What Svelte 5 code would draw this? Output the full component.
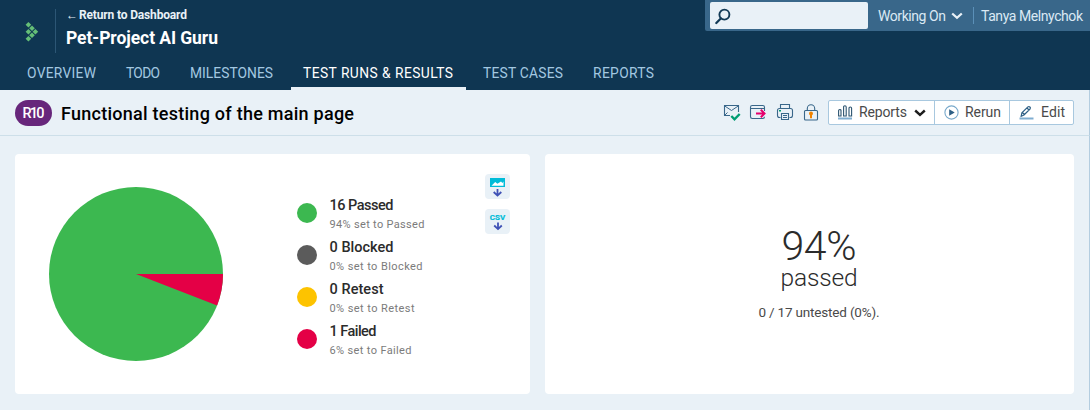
<script>
  const tabs = [
    { label: 'OVERVIEW', w: 69 },
    { label: 'TODO', w: 34 },
    { label: 'MILESTONES', w: 83 },
    { label: 'TEST RUNS & RESULTS', w: 150, active: true },
    { label: 'TEST CASES', w: 80 },
    { label: 'REPORTS', w: 61 }
  ];

  const statuses = [
    { count: 16, name: 'Passed', percent: 94, color: '#3cb850', w: 64, sw: 95 },
    { count: 0, name: 'Blocked', percent: 0, color: '#5b5b5b', w: 64, sw: 93 },
    { count: 0, name: 'Retest', percent: 0, color: '#fdc300', w: 54, sw: 85 },
    { count: 1, name: 'Failed', percent: 6, color: '#e40046', w: 47, sw: 82 }
  ];

  const radius = 87;
  const angle = (1 / 17) * Math.PI * 2;
  const endX = radius + radius * Math.cos(angle);
  const endY = radius + radius * Math.sin(angle);

  const logoDots = [[3.4, 3.7], [7, 7.2], [3.4, 10.7], [10.4, 10.7], [7, 14.2], [3.4, 17.7]];

  // Tracks a label so that it fills the given width.
  function track(node, width) {
    const glyphs = node.textContent.length;
    const natural = node.getBoundingClientRect().width;
    const spacing = (width - natural) / (glyphs - 1);
    node.style.letterSpacing = `${spacing}px`;
    node.style.marginRight = `${-spacing}px`;
  }
</script>

<div class="page">
  <header>
    <div class="top">
      <div class="logo">
        <svg width="14" height="22" viewBox="0 0 14 22" fill="#65bf77">
          {#each logoDots as [x, y]}
            <path d="M{x} {y - 2.8}l2.8 2.8-2.8 2.8-2.8-2.8z" />
          {/each}
        </svg>
      </div>
      <div class="project">
        <a class="back" href="#dashboard"><b>←</b><span use:track={108}>Return to Dashboard</span></a>
        <div class="name"><span use:track={152}>Pet-Project AI Guru</span></div>
      </div>
      <div class="user">
        <div class="search">
          <svg width="16" height="17" viewBox="0 0 16 17" fill="none" stroke="#123a56">
            <circle cx="9.4" cy="6.6" r="5" stroke-width="1.9" />
            <path d="M5.8 10.4L1.3 15" stroke-width="2.2" stroke-linecap="round" />
          </svg>
        </div>
        <div class="working"><span use:track={68}>Working On</span></div>
        <svg class="chev" width="12" height="8" viewBox="0 0 12 8" fill="none" stroke="#e9f1f7" stroke-width="2.3"><path d="M1.2 1.5L6 5.8l4.8-4.3" /></svg>
        <div class="me"><span use:track={102}>Tanya Melnychok</span></div>
      </div>
    </div>
    <nav>
      {#each tabs as t}
        <a href="#tab" class:active={t.active}><span use:track={t.w}>{t.label}</span></a>
      {/each}
    </nav>
  </header>

  <section class="titlebar">
    <div class="badge"><span use:track={22}>R10</span></div>
    <h1><span use:track={293}>Functional testing of the main page</span></h1>
    <div class="icons">
      <svg width="18" height="18" viewBox="0 0 18 18" fill="none">
        <path d="M7 11.5H1.500v-10h14V8" stroke="#39678a" stroke-width="1.1" />
        <path d="M1.800 2L8.500 6.500 15.200 2M1.800 11.200l2.700-2.700" stroke="#39678a" />
        <path d="M8.300 12l3.200 3.300L16.700 10" stroke="#009d73" stroke-width="2.400" />
      </svg>
      <svg width="18" height="18" viewBox="0 0 18 18" fill="none">
        <path d="M15.500 7V3.200q0-1.700-1.700-1.700H3.200q-1.700 0-1.700 1.700v9.600q0 1.700 1.700 1.700h10.600q1.700 0 1.700-1.700M1.500 4.500h14" stroke="#39678a" stroke-width="1.1" />
        <path d="M7 9.500h8M11.800 5.800l3.700 3.700-3.700 3.700" stroke="#e5006d" stroke-width="2" />
      </svg>
      <svg width="18" height="18" viewBox="0 0 18 18" fill="none" stroke="#39678a" stroke-width="1.1">
        <path d="M4.500 4.500v-4h9v4M4.500 13.500h-1Q1.500 13.500 1.500 11.500V6.500q0-2 2-2h11q2 0 2 2v5q0 2-2 2h-1" />
        <path d="M5.500 9.500h7v6h-7zM7 11.500h4M7 13.500h4" />
        <path d="M3 6.700h2" stroke="#009d73" stroke-width="1.500" />
      </svg>
      <svg width="18" height="18" viewBox="0 0 18 18" fill="none">
        <rect x="2.500" y="6.500" width="13" height="9.500" rx="1" stroke="#39678a" stroke-width="1.1" />
        <path d="M5.300 6.500V4.500a3.700 3.700 0 0 1 7.400 0v2" stroke="#39678a" stroke-width="1.1" />
        <circle cx="9" cy="9.500" r="2" fill="#f08300" /><path d="M9 10v4.300" stroke="#f08300" stroke-width="2" />
      </svg>
    </div>
    <div class="buttons">
      <button class="reports">
        <svg width="15" height="16" viewBox="0 0 15 16" fill="none">
          <path d="M.6 5.500q0-1 1.200-1t1.200 1v5.500H.6zM5.600 2q0-1.200 1.300-1.200T8.200 2v9H5.600zM11 3.200Q11 2 12.300 2t1.300 1.200V11H11z" stroke="#2d5470" stroke-width="1.100" />
          <path d="M0 13.500h14" stroke="#7fadd0" stroke-width="2" />
        </svg>
        <span use:track={48}>Reports</span>
        <svg class="arrow" width="12" height="8" viewBox="0 0 12 8" fill="none" stroke="#1d1d1d" stroke-width="2.400"><path d="M1.200 1.500L6 5.800l4.800-4.300" /></svg>
      </button>
      <button class="rerun">
        <svg width="15" height="16" viewBox="0 0 15 16"><circle cx="7.500" cy="7.500" r="6.600" fill="none" stroke="#79a9cb" stroke-width="1.100" /><path d="M5.200 4.200l5.500 3.300-5.500 3.300z" fill="#2d5f85" /></svg>
        <span use:track={36}>Rerun</span>
      </button>
      <button class="edit">
        <svg width="15" height="16" viewBox="0 0 15 16" fill="none">
          <path d="M2.200 11.200l.7-3.300 6-6q1-.8 2 .1t.1 2l-6 6zM8 3l2 2M3.600 7.700l2.100 2" stroke="#2d5f85" stroke-width="1.200" />
          <path d="M.5 13.500h14" stroke="#7fadd0" stroke-width="2" />
        </svg>
        <span use:track={24}>Edit</span>
      </button>
    </div>
  </section>

  <main>
    <div class="card chart">
      <svg class="pie" width="174" height="174" viewBox="0 0 174 174">
        <circle cx="87" cy="87" r="87" fill="#3cb850" />
        <path d="M{radius} {radius}H{radius * 2}A{radius} {radius} 0 0 1 {endX} {endY}z" fill="#e40046" />
      </svg>
      <ul>
        {#each statuses as s}
          <li>
            <i style="background: {s.color}"></i>
            <div>
              <div class="count"><span use:track={s.w}>{s.count} {s.name}</span></div>
              <div class="sub"><span use:track={s.sw}>{s.percent}% set to {s.name}</span></div>
            </div>
          </li>
        {/each}
      </ul>
      <div class="exports">
        <a href="#image" aria-label="Save image">
          <svg width="25" height="25" viewBox="0 0 25 25" fill="none">
            <path d="M5 4h15v9H5z" fill="#00bcd8" />
            <path d="M6.500 11.700L10.200 8l2.200 1.800L16 7.500l1.400 1.500 1.100-1.500v4.200z" fill="#fff" />
            <path d="M12.500 15v6.500M8.700 18l3.800 3.600 3.800-3.600" stroke="#3f51b5" stroke-width="1.800" />
          </svg>
        </a>
        <a href="#csv" aria-label="Save data">
          <span class="csv">CSV</span>
          <svg width="10" height="9" viewBox="0 0 10 9" fill="none" stroke="#3f51b5" stroke-width="1.800"><path d="M5 .5V7M1.200 3.500L5 7.100l3.800-3.600" /></svg>
        </a>
      </div>
    </div>
    <div class="card summary">
      <div class="big"><span use:track={75}>94%</span></div>
      <div class="passed"><span use:track={77}>passed</span></div>
      <div class="untested"><span use:track={121}>0 / 17 untested (0%).</span></div>
    </div>
  </main>
</div>

<style>
  :global(body) { margin: 0; background: #e9f1f7; }
  .page {
    box-sizing: border-box; width: 1090px; height: 410px; overflow: hidden;
    font-family: Roboto, "Liberation Sans", sans-serif; background: #e9f1f7; color: #2b2b2b;
  }
  span { white-space: nowrap; display: inline-block; }
  a { text-decoration: none; color: inherit; }
  svg { display: block; flex: none; }

  header { height: 90px; background: #0f3652; display: flex; flex-direction: column; }
  .top { height: 63px; display: flex; align-items: flex-start; }
  .logo { box-sizing: border-box; width: 56px; height: 44px; margin-top: 9px; padding: 12px 0 0 25px; border-right: 1px solid #2c5675; }
  .project { padding: 7px 0 0 10px; display: flex; flex-direction: column; gap: 3px; }
  .back { display: flex; font-size: 12px; font-weight: 700; line-height: 16px; height: 16px; color: #e9f1f7; }
  .back b { width: 13px; font-weight: 700; font-size: 12px; }
  .name { font-size: 17.500px; font-weight: 700; line-height: 24px; color: #fff; }
  .user {
    box-sizing: border-box; margin-left: auto; width: 385px; height: 31px; padding-left: 5px; background: #39678a;
    display: flex; align-items: center; font-size: 14px; line-height: 28px; color: #dbe9f4; border-bottom-left-radius: 2px;
  }
  .search { box-sizing: border-box; width: 158px; height: 27px; padding: 6px 0 0 5px; background: #e9f1f7; border-radius: 2px; }
  .working { width: 69px; margin-left: 10px; }
  .chev { margin-left: 4px; }
  .me { height: 17px; line-height: 18px; margin-left: 10px; padding-left: 7px; border-left: 1px solid #5b90b8; }
  nav { display: flex; gap: 6px; padding-left: 15px; font-size: 13.800px; line-height: 20px; color: #a3c8e1; }
  nav a { box-sizing: border-box; height: 27px; padding: 0 12px; border-bottom: 3px solid transparent; }
  nav a.active { color: #fff; padding-right: 13px; border-color: #e9f1f7; margin-right: -1px; }

  .titlebar {
    box-sizing: border-box; height: 46px; padding: 0 15px; display: flex; align-items: flex-start;
    border-bottom: 1px solid #cddfe9; border-right: 1px solid #b3cde0;
  }
  .badge {
    width: 37px; height: 26px; margin-top: 10px; border-radius: 13px; background: #67267b; color: #fff;
    display: flex; justify-content: center; font-size: 14.500px; font-weight: 500; line-height: 27px;
  }
  h1 { margin: 10px 0 0 9px; font-size: 18px; line-height: 27px; font-weight: 500; color: #000; }
  .icons { display: flex; gap: 8.300px; margin: 13.500px 0 0 auto; }
  .buttons {
    box-sizing: border-box; width: 246px; height: 25px; margin: 10px 0 0 8px; display: flex; background: #fff;
    border: 1px solid #a8c8df; border-radius: 2px;
  }
  button {
    box-sizing: border-box; height: 23px; margin: 0; padding: 0; border: 0; background: none; display: flex; align-items: center;
    font: 14px/23px Roboto, sans-serif; color: #4a4a4a;
  }
  button + button { border-left: 1px solid #a8c8df; }
  .reports { width: 105px; padding-left: 9px; gap: 6px; }
  .arrow { margin-left: 1px; }
  .rerun { width: 75px; padding-left: 9px; gap: 6px; }
  .edit { width: 64px; padding-left: 9px; gap: 7px; }

  main { display: flex; gap: 15px; padding: 18px 15px 16px; border-right: 1px solid #b3cde0; }
  .card { box-sizing: border-box; height: 240px; background: #fff; border-radius: 4px; flex: none; }
  .chart { width: 515px; display: flex; align-items: flex-start; padding-left: 34px; }
  .pie { margin-top: 33px; }
  ul { list-style: none; margin: 41px 0 0 74px; padding: 0; display: flex; flex-direction: column; gap: 5px; }
  li { display: flex; gap: 12.500px; height: 37px; }
  i { width: 20px; height: 20px; margin-top: 8px; border-radius: 50%; }
  .count { height: 20px; font-size: 14.500px; font-weight: 500; line-height: 21px; }
  .sub { height: 16px; margin-top: 1px; font-size: 11px; line-height: 18px; color: #7b7b7b; }
  .exports { margin: 20px 20px 0 auto; display: flex; flex-direction: column; gap: 10px; }
  .exports a { width: 25px; height: 25px; border-radius: 4px; background: #e9f1f7; display: flex; flex-direction: column; align-items: center; }
  .csv { height: 13px; font-size: 8px; font-weight: 700; line-height: 18px; color: #00bcd8; -webkit-text-stroke: .2px #00bcd8; }
  .summary { width: 529px; display: flex; flex-direction: column; align-items: center; padding: 74px 0 0 19px; }
  .big { font-size: 41px; font-weight: 300; line-height: 36px; height: 36px; }
  .passed { font-size: 24.500px; font-weight: 300; line-height: 27px; height: 27px; }
  .untested { font-size: 13.500px; line-height: 20px; margin-top: 11px; color: #4a4a4a; }
</style>
